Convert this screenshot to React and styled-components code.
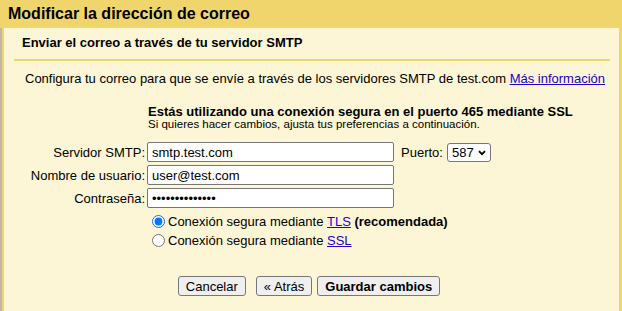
import React from "react";
import styled, { createGlobalStyle } from "styled-components";

const GlobalStyle = createGlobalStyle`
  html, body {
    margin: 0;
    padding: 0;
    background: #fcf6d6;
  }
  body {
    font-family: "Liberation Sans", Arial, sans-serif;
    font-size: 13px;
    color: #000;
  }
`;

const Page = styled.div`
  display: flex;
  flex-direction: column;
  height: 100vh;
  overflow: hidden;
`;

const TitleBar = styled.div`
  background: #f0d56c;
  height: 28px;
  line-height: 28px;
  padding-left: 8px;
  font-size: 16px;
  font-weight: bold;
`;

const Frame = styled.div`
  flex: 1;
  display: flex;
  background: #f0d56c;
  border-left: 2px solid #bdb9a6;
  padding: 0 3px 0 2px;
`;

const Panel = styled.div`
  flex: 1;
  display: flex;
  flex-direction: column;
  background: #fcf6d6;
`;

const SectionHead = styled.div`
  margin: 0 9px 0 10px;
  padding: 7px 0 8px 8px;
  line-height: 16px;
  font-weight: bold;
  border-bottom: 2px solid #f0d56c;
`;

const Intro = styled.p`
  margin: 10px 0 0 21px;
  line-height: 16px;
`;

const Link = styled.a`
  color: #2200cc;
  text-decoration: underline;
  cursor: pointer;
`;

const Form = styled.div`
  display: flex;
  flex-direction: column;
  margin-top: 18px;
`;

const Notice = styled.div`
  margin-left: 144px;
  line-height: 13px;
`;

const NoticeTitle = styled.div`
  font-weight: bold;
`;

const NoticeHint = styled.div`
  font-size: 11.5px;
`;

const Fields = styled.div`
  display: flex;
  flex-direction: column;
  gap: 3px;
  margin-top: 11px;
`;

const Row = styled.div`
  display: flex;
  align-items: center;
`;

const Label = styled.label`
  flex: none;
  width: 141px;
  margin-right: 2px;
  text-align: right;
`;

const TextInput = styled.input`
  box-sizing: border-box;
  width: 247px;
  height: 20px;
  padding: 0 4px;
  border: 1px solid #767676;
  border-radius: 2px;
  background: #fff;
  font-family: inherit;
  font-size: 13px;
  color: #000;
  outline: none;
`;

const PortLabel = styled.label`
  margin-left: 7px;
`;

const SelectBox = styled.div`
  position: relative;
  width: 44px;
  height: 19px;
  margin-left: 4px;
`;

const PortSelect = styled.select`
  appearance: none;
  box-sizing: border-box;
  width: 100%;
  height: 100%;
  margin: 0;
  padding: 0 0 0 4px;
  border: 1px solid #767676;
  border-radius: 3px;
  background: #fff;
  font-family: inherit;
  font-size: 13px;
  color: #000;
`;

const Chevron = styled.svg`
  position: absolute;
  right: 5px;
  top: 7px;
  pointer-events: none;
`;

const RadioList = styled.div`
  display: flex;
  flex-direction: column;
  margin: 4px 0 0 143px;
`;

const RadioRow = styled.label`
  display: flex;
  align-items: center;
  height: 19px;
`;

const Radio = styled.input`
  width: 13px;
  height: 13px;
  margin: 0 3px 0 5px;
  accent-color: #0075ff;
`;

const ButtonRow = styled.div`
  display: flex;
  justify-content: center;
  gap: 5px;
  margin-top: 26px;
  padding-right: 5px;
`;

const Button = styled.button`
  box-sizing: border-box;
  height: 20px;
  padding: 0 7px;
  margin-right: ${p => (p.$spaced ? 5 : 0)}px;
  border: 1px solid #767676;
  border-radius: 3px;
  background: #efefef;
  font-family: inherit;
  font-size: 13px;
  font-weight: ${p => (p.$primary ? "bold" : "normal")};
  color: #000;
`;

export default function App() {
  return (
    <Page>
      <GlobalStyle />
      <TitleBar>Modificar la dirección de correo</TitleBar>
      <Frame>
        <Panel>
          <SectionHead>Enviar el correo a través de tu servidor SMTP</SectionHead>
          <Intro>
            Configura tu correo para que se envíe a través de los servidores SMTP de test.com{" "}
            <Link>Más información</Link>
          </Intro>
          <Form>
            <Notice>
              <NoticeTitle>Estás utilizando una conexión segura en el puerto 465 mediante SSL</NoticeTitle>
              <NoticeHint>Si quieres hacer cambios, ajusta tus preferencias a continuación.</NoticeHint>
            </Notice>
            <Fields>
              <Row>
                <Label>Servidor SMTP:</Label>
                <TextInput type="text" defaultValue="smtp.test.com" />
                <PortLabel>Puerto:</PortLabel>
                <SelectBox>
                  <PortSelect defaultValue="587">
                    <option value="587">587</option>
                    <option value="465">465</option>
                    <option value="25">25</option>
                  </PortSelect>
                  <Chevron width="8" height="6" viewBox="0 0 8 6">
                    <path d="M1 1.2 L4 4.2 L7 1.2" fill="none" stroke="#000" strokeWidth="1.8" />
                  </Chevron>
                </SelectBox>
              </Row>
              <Row>
                <Label>Nombre de usuario:</Label>
                <TextInput type="text" defaultValue="user@test.com" />
              </Row>
              <Row>
                <Label>Contraseña:</Label>
                <TextInput type="password" defaultValue="passwordpasswo" />
              </Row>
            </Fields>
            <RadioList>
              <RadioRow>
                <Radio type="radio" name="security" defaultChecked />
                Conexión segura mediante&nbsp;<Link>TLS</Link>&nbsp;<b>(recomendada)</b>
              </RadioRow>
              <RadioRow>
                <Radio type="radio" name="security" />
                Conexión segura mediante&nbsp;<Link>SSL</Link>
              </RadioRow>
            </RadioList>
            <ButtonRow>
              <Button $spaced>Cancelar</Button>
              <Button>« Atrás</Button>
              <Button $primary>Guardar cambios</Button>
            </ButtonRow>
          </Form>
        </Panel>
      </Frame>
    </Page>
  );
}
